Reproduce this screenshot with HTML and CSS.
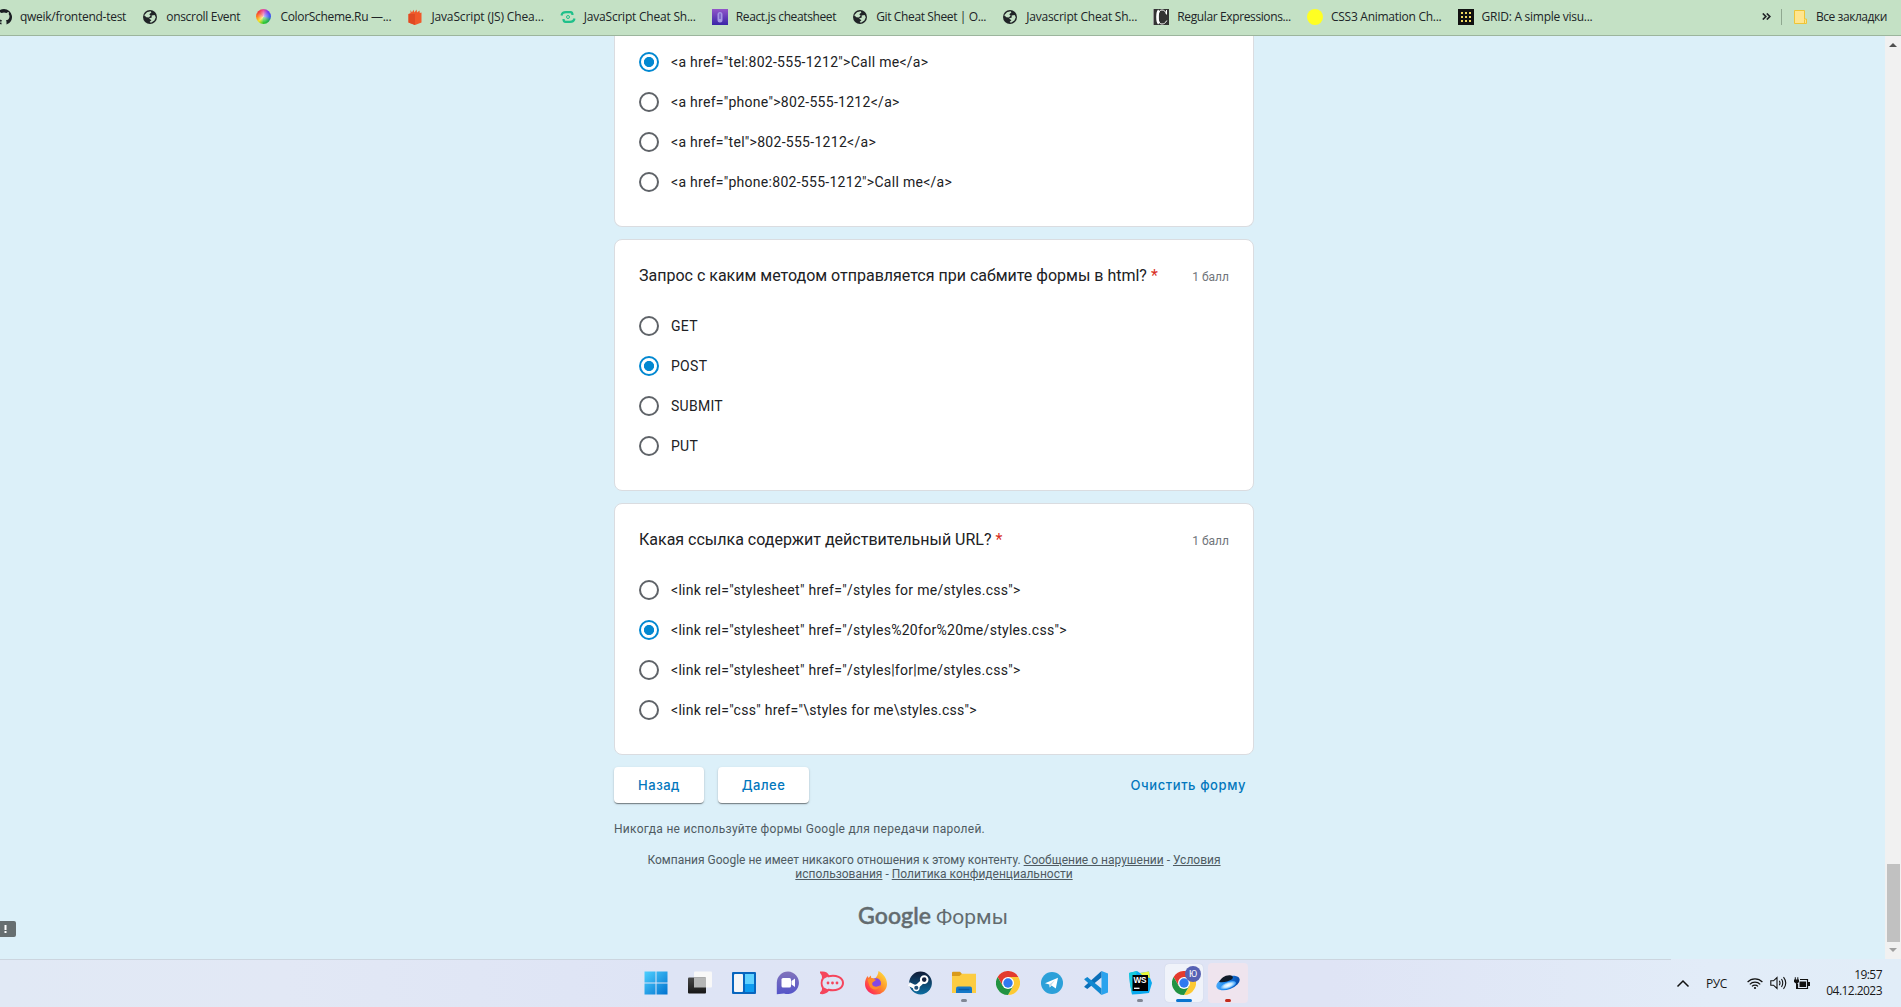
FILE: index.html
```html
<!DOCTYPE html>
<html lang="ru">
<head>
<meta charset="utf-8">
<title>Google Формы</title>
<link rel="stylesheet" href="styles.css">
</head>
<body>
<svg width="0" height="0" class="defs">
  <defs>
    <symbol id="globe" viewBox="0 0 16 16"><circle cx="8" cy="8" r="7" fill="#202427"/><path d="M2.2 6.2 5 3.2 8.6 2.2 9.4 3.6 7.2 5.2 8.6 6.6 7 8.4 4.4 8.2ZM9.6 6.4 12.6 6 13.8 8.2 12.4 11.4 9 13.8 7.6 13 9.4 11.2 7 9.6 9.8 8.6Z" fill="#c4e1c5"/></symbol>
    <symbol id="chrome" viewBox="0 0 24 24"><circle cx="12" cy="12" r="12" fill="#fff"/><path d="M12 6H22.4A12 12 0 0 1 12 24L17.2 15Z" fill="#fcc934"/><path d="M12 6 6.8 15 1.6 6Z" fill="#e33b2e"/><path d="M12 6 1.6 6A12 12 0 0 1 22.4 6Z" fill="#e33b2e"/><path d="M6.8 15 1.6 6A12 12 0 0 0 12 24L17.2 15Z" fill="#229342"/><circle cx="12" cy="12" r="6" fill="#fff"/><circle cx="12" cy="12" r="4.7" fill="#3079f0"/></symbol>
  </defs>
</svg>

<nav class="bookmarks">
  <a class="bm"><svg class="ic" viewBox="0 0 16 16"><path d="M8 0A8 8 0 0 0 5.5 15.6V13.5C3.3 14 2.8 12.500 2.800 12.500 2.400 11.600 1.900 11.300 1.900 11.300 1.200 10.800 2.800 11 3.300 11.900 4 13 5.300 12.600 5.500 12.400 5.500 12 5.800 11.500 6.100 11.300 4 11 2.500 10 2.500 7.300A3.100 3.100 0 0 1 3.300 5.200 2.900 2.900 0 0 1 3.400 3.100S4 2.900 5.500 3.900A7.600 7.600 0 0 1 10.500 3.900C12 2.900 12.600 3.100 12.600 3.100A2.900 2.900 0 0 1 12.700 5.200 3.100 3.100 0 0 1 13.500 7.300C13.500 10 12 11 9.900 11.300 10.300 11.600 10.500 12.200 10.500 13V15.600A8 8 0 0 0 8 0Z" fill="#1b1f23"/></svg><span>qweik/frontend-test</span></a>
  <a class="bm"><svg class="ic"><use href="#globe"/></svg><span>onscroll Event</span></a>
  <a class="bm"><i class="ic wheel"></i><span>ColorScheme.Ru —...</span></a>
  <a class="bm"><svg class="ic" viewBox="0 0 16 16"><path d="M1.500 5 3.600 4 3.400 1 5 3.500 6.500 .8 7.500 3.400 9.500 .6 10 3.400 12.500 1.600 12.800 4 14.500 3.500V13.500L8 16 1.500 13.500Z" fill="#f0592a"/><path d="M8 5V16L1.500 13.500V5Z" fill="#e04a22"/></svg><span>JavaScript (JS) Chea...</span></a>
  <a class="bm"><svg class="ic" viewBox="0 0 16 16" fill="none" stroke="#1fc08a" stroke-width="2.200"><path d="M1.500 6.500Q2 3.200 6 3.200H10.500Q12.500 3.200 12.500 6M14.500 9.500Q14 12.800 10 12.800H5.500Q3.500 12.800 3.500 10"/><circle cx="8" cy="8" r="1.500" stroke-width="1"/></svg><span>JavaScript Cheat Sh...</span></a>
  <a class="bm"><svg class="ic" viewBox="0 0 16 16"><defs><linearGradient id="rp" x2="0" y2="1"><stop stop-color="#9256c9"/><stop offset="1" stop-color="#3a25a8"/></linearGradient></defs><path d="M0 0H16V16H0Z" fill="url(#rp)"/><rect x="5.500" y="3" width="5" height="10.500" rx="2.500" fill="#a596e4"/><path d="M8 4.500V10" stroke="#5a3bb5"/></svg><span>React.js cheatsheet</span></a>
  <a class="bm"><svg class="ic"><use href="#globe"/></svg><span>Git Cheat Sheet | O...</span></a>
  <a class="bm"><svg class="ic"><use href="#globe"/></svg><span>Javascript Cheat Sh...</span></a>
  <a class="bm"><svg class="ic" viewBox="0 0 16 16"><path d="M0 0H16V16H0Z" fill="#333"/><path d="M13.300 5C12.500 2 11 1 9 1 6 1 5 4 5 8S6 15 9 15C11 15 12.500 14 13.800 11.500" fill="none" stroke="#fff" stroke-width="1"/><path d="M6 1.500C4 3.500 4 12.500 6 14.500" fill="none" stroke="#fff" stroke-width="2.600"/><path d="M13.500 1V5.500M0 0V16" stroke="#fff"/></svg><span>Regular Expressions...</span></a>
  <a class="bm"><svg class="ic" viewBox="0 0 16 16"><circle cx="8" cy="8" r="8" fill="#ffff22"/></svg><span>CSS3 Animation Ch...</span></a>
  <a class="bm"><svg class="ic" viewBox="0 0 16 16"><path d="M0 0H16V16H0Z" fill="#111"/><path d="M3 4H13M3 8H13M3 12H13" stroke="#f0d860" stroke-width="2" stroke-dasharray="2 2"/></svg><span>GRID: A simple visu...</span></a>
  <span class="more"><svg width="9" height="7" viewBox="0 0 9 7" fill="none" stroke="#202427" stroke-width="1.700"><path d="M.8 .5 3.800 3.500 .8 6.500M4.800 .5 7.800 3.500 4.800 6.500"/></svg></span>
  <a class="bm all"><svg class="ic" viewBox="0 0 16 16"><path d="M2.500 1.500H12.500V10H14.500V14.500H2.500Z" fill="#ffe58f" stroke="#eec437"/><path d="M12.500 14V10.500" stroke="#eec437"/></svg><span>Все закладки</span></a>
</nav>

<div class="window">
  <main class="form">
    <section class="card first">
      <label class="opt on"><i></i><span>&lt;a href="tel:802-555-1212"&gt;Call me&lt;/a&gt;</span></label>
      <label class="opt"><i></i><span>&lt;a href="phone"&gt;802-555-1212&lt;/a&gt;</span></label>
      <label class="opt"><i></i><span>&lt;a href="tel"&gt;802-555-1212&lt;/a&gt;</span></label>
      <label class="opt"><i></i><span>&lt;a href="phone:802-555-1212"&gt;Call me&lt;/a&gt;</span></label>
    </section>
    <section class="card">
      <header><h2>Запрос с каким методом отправляется при сабмите формы в html? <b>*</b></h2><small>1 балл</small></header>
      <label class="opt"><i></i><span>GET</span></label>
      <label class="opt on"><i></i><span>POST</span></label>
      <label class="opt"><i></i><span>SUBMIT</span></label>
      <label class="opt"><i></i><span>PUT</span></label>
    </section>
    <section class="card">
      <header><h2>Какая ссылка содержит действительный URL? <b>*</b></h2><small>1 балл</small></header>
      <label class="opt"><i></i><span>&lt;link rel="stylesheet" href="/styles for me/styles.css"&gt;</span></label>
      <label class="opt on"><i></i><span>&lt;link rel="stylesheet" href="/styles%20for%20me/styles.css"&gt;</span></label>
      <label class="opt"><i></i><span>&lt;link rel="stylesheet" href="/styles|for|me/styles.css"&gt;</span></label>
      <label class="opt"><i></i><span>&lt;link rel="css" href="\styles for me\styles.css"&gt;</span></label>
    </section>
    <div class="actions">
      <button>Назад</button>
      <button>Далее</button>
      <a class="clear">Очистить форму</a>
    </div>
    <p class="warn">Никогда не используйте формы Google для передачи паролей.</p>
    <p class="legal">Компания Google не имеет никакого отношения к этому контенту. <u>Сообщение о нарушении</u> - <u>Условия</u><br><u>использования</u> - <u>Политика конфиденциальности</u></p>
    <div class="logo"><strong>Google</strong><span>Формы</span></div>
    <div class="report"><svg width="3" height="8" viewBox="0 0 3 8"><path d="M.5 0H2.500V5H.5ZM.5 6H2.500V8H.5Z" fill="#fff"/></svg></div>
  </main>
  <aside class="scroll"><i class="up"></i><i class="thumb"></i><i class="down"></i></aside>
</div>

<footer class="taskbar">
  <div class="apps">
    <div class="app"><svg viewBox="0 0 24 24"><defs><linearGradient id="w" x2="1" y2="1"><stop stop-color="#4fd0ff"/><stop offset="1" stop-color="#0072cf"/></linearGradient></defs><path d="M.5 .5H11.500V11.500H.5ZM12.500 .5H23.500V11.500H12.500ZM.5 12.500H11.500V23.500H.5ZM12.500 12.500H23.500V23.500H12.500Z" fill="url(#w)"/></svg></div>
    <div class="app"><svg viewBox="0 0 24 24"><defs><linearGradient id="tv" x2="0" y2="1"><stop stop-color="#484848"/><stop offset="1" stop-color="#161616"/></linearGradient></defs><rect x="6" y=".5" width="18" height="16" rx="1" fill="#f8f8f8"/><rect x="0" y="6.500" width="18" height="16" rx="1" fill="url(#tv)"/><path d="M6 6.500H18V16.500H6Z" fill="#b5b6b6"/></svg></div>
    <div class="app"><svg viewBox="0 0 24 24"><rect y="1" width="24" height="22" rx="1" fill="#0866be"/><rect x="2" y="3" width="9" height="18" rx="1" fill="#f4f6f8"/><path d="M13 3H22V13H13Z" fill="#61d2ff"/><path d="M13 13H22V21H13Z" fill="#0e9cf0"/></svg></div>
    <div class="app"><svg viewBox="0 0 24 24"><defs><linearGradient id="tc" x2="0" y2="1"><stop stop-color="#8274bb"/><stop offset="1" stop-color="#5454c9"/></linearGradient></defs><path d="M12 .5A11.300 11.300 0 1 1 8 22.500L.8 23.300V11.500A11.300 11.300 0 0 1 12 .5Z" fill="url(#tc)"/><rect x="5.500" y="7" width="9.500" height="9.500" rx="1.500" fill="#fff"/><path d="M15.500 10 19 7.500V16L15.500 13.500Z" fill="#fff"/></svg></div>
    <div class="app"><svg viewBox="0 0 24 24"><path d="M1 1.500C5 1 7.500 3 8.500 5.300 16 3.500 23 6.500 23 12S16 20.500 8.500 18.800C7 21 4 22.500 1 22 3 20 3.300 18 2.800 16.500 1.300 14 1.300 10 2.800 7.600 3.300 5.500 3 3.500 1 1.500Z" fill="none" stroke="#f5455c" stroke-width="2"/><path d="M1 1.500C5 1 7 2.500 8.500 5.300L3.500 8ZM1 22C4 22.500 7 21.300 8.500 18.800L4 16.500Z" fill="#f5455c"/><g fill="#f5455c"><circle cx="8" cy="12" r="1.400"/><circle cx="12.500" cy="12" r="1.400"/><circle cx="17" cy="12" r="1.400"/></g></svg></div>
    <div class="app"><svg viewBox="0 0 24 24"><defs><linearGradient id="ff" x1="1" x2="0" y2="1"><stop stop-color="#fff044"/><stop offset=".45" stop-color="#ff9328"/><stop offset=".8" stop-color="#ff3750"/><stop offset="1" stop-color="#e31587"/></linearGradient></defs><path d="M14.500 0C19 2.500 23 7 23 13A11 10.500 0 0 1 1 13C1 9.500 2 7 3.800 5L4.500 7 6.800 4.500 7.300 7 11 7.500C13 5.500 14.300 3 14.500 0Z" fill="url(#ff)"/><circle cx="12" cy="12.300" r="5" fill="#8547e3"/><path d="M3.500 8.500C6.500 7 9.500 7.500 12 9L8.500 11.500C7 15 12 17.500 16.500 14 15 19.500 8 20 5.500 15Z" fill="#ff8b2a"/></svg></div>
    <div class="app"><svg viewBox="0 0 24 24"><defs><linearGradient id="st" x2="0" y2="1"><stop stop-color="#111b36"/><stop offset="1" stop-color="#0c6da1"/></linearGradient></defs><circle cx="12.500" cy="12" r="11.400" fill="url(#st)"/><path d="M.8 13 8 16.500 14 11" stroke="#fff" stroke-width="4" fill="none"/><circle cx="16.200" cy="8.600" r="3.300" fill="#14213e" stroke="#fff" stroke-width="2"/><circle cx="8.300" cy="16.800" r="2.700" fill="#235279" stroke="#fff" stroke-width="1.300"/></svg></div>
    <div class="app"><svg viewBox="0 0 24 24"><path d="M0 1.800Q0 .8 1 .8H8L10.500 3.500V6H0Z" fill="#d99a1a"/><path d="M0 5H7.500L10 2.800H24V22H0Z" fill="#fccc42"/><path d="M4 22V17.500Q4 15.500 6 15.500H18Q20 15.500 20 17.500V22Z" fill="#1578c8"/><path d="M6.500 18.500H17.500" stroke="#0b5ba1" stroke-width="1.500"/></svg><i class="dot"></i></div>
    <div class="app"><svg><use href="#chrome"/></svg></div>
    <div class="app"><svg viewBox="0 0 24 24"><circle cx="12" cy="12" r="11" fill="#2ca0d9"/><path d="M5 12.200 18 6.800 15.800 17.500 11.500 14.500 9.800 16.500 9.300 13.500Z" fill="#fff"/><path d="M9.300 13.500 15 9.300 11 14.200 9.800 16.500Z" fill="#bfdceb"/></svg></div>
    <div class="app"><svg viewBox="0 0 24 24"><path d="M17.500 0 24 2.600V21.400L17.500 24Z" fill="#2aa3ee"/><path d="M17.500 0V6.500L3.300 18 .3 16 .3 15.400Z" fill="#0b6fb8"/><path d="M17.500 24V17.500L3.300 6 .3 8V8.600Z" fill="#1187d0"/></svg></div>
    <div class="app"><svg viewBox="0 0 24 24"><path d="M1 2 9 0 12 2 21 .5 22 7 24 12 21 22 12 23 4 23.500 2 13Z" fill="#08a8ee"/><path d="M12 2 21 .5 22 7 15 5Z" fill="#e8f73a"/><path d="M1 2 9 0 6 12 4 23 2 13Z" fill="#16cbdc"/><path d="M4.500 4H20V20H4.500Z" fill="#000"/><path d="M6 17.300H11.500" stroke="#fff" stroke-width="1.300"/><text x="5.400" y="12.200" textLength="13.200" lengthAdjust="spacingAndGlyphs" class="ws">WS</text></svg><i class="dot"></i></div>
    <div class="app active"><svg><use href="#chrome"/></svg><b class="badge">Ю</b><i class="dot wide"></i></div>
    <div class="app disk"><svg viewBox="0 0 24 24"><defs><linearGradient id="yd" x2="1" y2=".3"><stop stop-color="#5bb5fa"/><stop offset=".5" stop-color="#1785f0"/><stop offset="1" stop-color="#0a50b0"/></linearGradient><radialGradient id="gl"><stop stop-color="#fff"/><stop offset=".5" stop-color="#c5e8ff"/><stop offset="1" stop-color="#2a93f5"/></radialGradient></defs><ellipse cx="12" cy="12" rx="12.200" ry="6.300" transform="rotate(-20 12 12)" fill="url(#yd)"/><path d="M3 11C5 7 9 3.800 14 4.200 17.500 4.600 17.500 7 15.500 8.500 12.500 10.500 7 12 3 11Z" fill="#111b29"/><ellipse cx="12" cy="14.300" rx="8.500" ry="3.300" transform="rotate(-20 12 14.300)" fill="url(#gl)"/></svg><i class="dot red"></i></div>
  </div>
  <div class="tray">
    <svg class="chev" width="14" height="9" viewBox="0 0 14 9"><path d="M1.500 7.500 7 2 12.500 7.500" fill="none" stroke="#111" stroke-width="1.500"/></svg>
    <span class="lang">РУС</span>
    <svg class="wifi" width="16" height="13" viewBox="0 0 16 13" fill="none" stroke="#111" stroke-width="1.200"><path d="M.6 5A10.200 10.200 0 0 1 15.400 5M2.800 7.300A7.200 7.200 0 0 1 13.200 7.300M5 9.400A4.200 4.200 0 0 1 11 9.400"/><circle cx="8" cy="11" r="1.100" fill="#111" stroke="none"/></svg>
    <svg class="snd" width="17" height="14" viewBox="0 0 17 14" fill="none" stroke="#111" stroke-width="1.100"><path d="M.8 4.800H3.500L7 1.500V12.500L3.500 9.200H.8ZM9.300 4.800Q10.700 7 9.300 9.200M11.500 3Q14 7 11.500 11M13.500 1.200Q18 7 13.500 12.800"/></svg>
    <svg class="bat" width="17" height="13" viewBox="0 0 17 13"><path d="M6 2.500H13.500V11.500H3.500V7" fill="none" stroke="#111" stroke-width="1.200"/><path d="M5.500 4.500H12V10H5.500ZM14 5H16V9H14ZM0 2.500H5V5L3.500 6.500V12H2V6.500L0 5ZM.8 .3H1.800V3H.8ZM3.300 .3H4.300V3H3.300Z" fill="#111"/></svg>
    <div class="clock"><span>19:57</span><span>04.12.2023</span></div>
  </div>
</footer>
</body>
</html>
```
FILE: styles.css
```css
* { box-sizing: border-box; }
body { margin: 0; width: 1901px; height: 1007px; overflow: hidden; display: flex; flex-direction: column; font-family: Roboto, sans-serif; background: #dcf0f9; }
.defs { position: absolute; }

.bookmarks { height: 36px; flex: none; display: flex; align-items: center; gap: 16.150px; padding: 0 14px 2px 0; background: #c4e1c5; border-bottom: 1px solid #9cb59d; font: 12px "Open Sans", sans-serif; color: #202427; }
.bm { display: flex; align-items: center; gap: 8px; white-space: nowrap; letter-spacing: -.27px; }
.bm:nth-child(2), .bm:nth-child(3) { letter-spacing: -.31px; }
.bm:nth-child(4) { letter-spacing: -.13px; }
.bm:nth-child(5), .bm:nth-child(8) { letter-spacing: -.22px; }
.bm:nth-child(6), .bm:nth-child(7), .bm:nth-child(9) { letter-spacing: -.38px; }
.bm.all { letter-spacing: -.44px; }
.bm:first-child { margin-left: -4px; }
.ic { width: 16px; height: 16px; flex: none; }
.wheel { width: 15px; height: 15px; margin-right: 1px; border-radius: 50%; background: radial-gradient(#ffffffaa, #fff0 60%), conic-gradient(#e84a9e, #6b3cf0, #3b5bf0, #22b14c, #2dc92d, #f5e12a, #ff7b1c, #f03b3b, #e84a9e); }
.more { margin-left: auto; display: flex; align-items: center; width: 20px; height: 16px; border-right: 1px solid #8fa890; }
.all { margin-left: -6px; }

.window { flex: 1; min-height: 0; display: flex; }
.form { flex: 1; position: relative; overflow: hidden; padding-left: 614px; }
.card { width: 640px; height: 252px; margin-bottom: 12px; padding: 0 24px; border: 1px solid #dadce0; border-radius: 8px; background: #fff; }
.card.first { height: 191px; padding-top: 6px; border-top: 0; border-radius: 0 0 8px 8px; }
.card header { display: flex; justify-content: space-between; align-items: center; height: 66px; padding-top: 5px; }
h2 { margin: 0; font-size: 16px; font-weight: 400; color: #202124; }
h2 b { font-weight: 400; color: #d93025; }
small { font-size: 12px; color: #70757a; padding-top: 3px; }
.opt { display: flex; align-items: center; gap: 12px; height: 40px; font-size: 14px; letter-spacing: .285px; color: #202124; white-space: pre; }
.opt i { width: 20px; height: 20px; border: 2px solid #5f6368; border-radius: 50%; }
.opt.on i { border-color: #0288d1; background: radial-gradient(circle, #0288d1 4.700px, #fff 5.400px); }

.actions { display: flex; align-items: center; gap: 14px; width: 640px; height: 36px; }
button { height: 36px; width: 90px; padding: 0; border: 0; border-radius: 4px; background: #fff; box-shadow: 0 2px 1px -1px #0003, 0 1px 1px #0004, 0 1px 3px #0002; font: 500 13px Inter, sans-serif; letter-spacing: .5px; color: #0277bd; }
button + button { width: 91px; }
.clear { margin-left: auto; padding-right: 8px; font: 500 13px Inter, sans-serif; letter-spacing: .58px; color: #0277bd; }
.warn, .legal { margin: 0; font-size: 12px; color: #4f5b62; }
.warn { margin-top: 19px; line-height: 14px; letter-spacing: .28px; }
.legal { width: 640px; margin-top: 17px; line-height: 14px; text-align: center; }
.logo { width: 638px; margin-top: 19px; display: flex; justify-content: center; align-items: baseline; gap: 5px; font-size: 21px; line-height: 30px; color: #626b6f; }
.logo strong { font: 500 23px/30px Lato, sans-serif; letter-spacing: .1px; -webkit-text-stroke: .5px #626b6f; }
.report { position: absolute; left: 0; bottom: 22px; width: 16px; height: 16px; border-radius: 0 2px 2px 0; background: #666e70; display: flex; align-items: center; padding-left: 4px; }

.scroll { width: 16px; background: #f1f1f1; display: flex; flex-direction: column; align-items: center; }
.up { border: 4px solid transparent; border-top: 0; border-bottom-color: #505050; margin-top: 7px; }
.thumb { width: 13px; height: 78px; margin-top: auto; background: #c1c1c1; }
.down { border: 4px solid transparent; border-bottom: 0; border-top-color: #a0a0a0; margin: 6px 0 7px; }

.taskbar { height: 48px; flex: none; display: flex; background: linear-gradient(90deg, #e1e9f5, #e2e8f5 15%, #dee4f5 35%, #dfe4f5 70%, #e2ecf8 90%, #e1edf8); }
.apps { width: 1671px; border-top: 1px solid #ccd5df; display: flex; padding-left: 634px; }
.app { position: relative; width: 44px; height: 47px; display: flex; align-items: center; justify-content: center; }
.app svg { position: relative; width: 24px; height: 24px; top: -.5px; }
.app.active::before, .app.disk::before { content: ""; position: absolute; inset: 4px 3px 5px; border-radius: 4px; background: #f0f3fa; box-shadow: 0 0 1px #8899aa66; }
.app.disk::before { background: #efe4ee; inset: 3px 2px 4px; box-shadow: none; }
.dot { position: absolute; bottom: 5px; left: 19px; width: 6px; height: 3px; border-radius: 2px; background: #818795; }
.dot.wide { left: 14px; width: 16px; background: #0a74cf; }
.dot.red { background: #c42b1c; }
.badge { position: absolute; left: 23px; top: 6px; width: 16px; height: 16px; border-radius: 50%; background: #5661b3; color: #fff; font: 9px/16px Roboto, sans-serif; text-align: center; }
.ws { font: bold 9px "Liberation Sans", sans-serif; fill: #fff; }

.tray { flex: 1; display: flex; align-items: center; padding: 0 19px 0 5px; font: 12px "Open Sans", sans-serif; color: #191919; }
.lang { margin-left: 16px; letter-spacing: -.4px; }
.wifi { margin-left: 20px; }
.snd { margin-left: 7px; }
.bat { margin-left: 7px; }
.clock { margin-left: auto; display: flex; flex-direction: column; align-items: flex-end; line-height: 16px; letter-spacing: -.55px; }
```
